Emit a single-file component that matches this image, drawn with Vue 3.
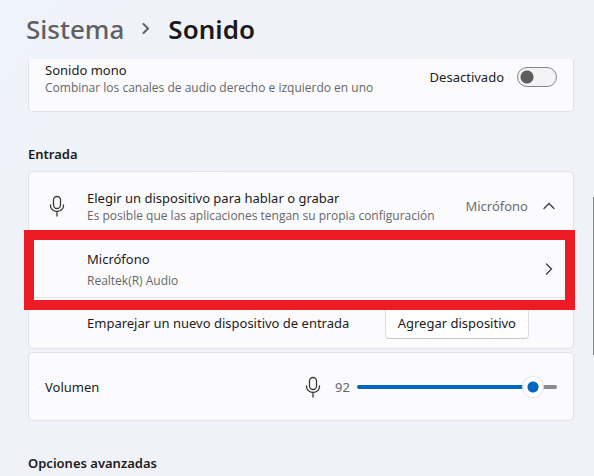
<template>
  <main class="settings">
    <header class="breadcrumb">
      <a href="#" class="crumb">Sistema</a>
      <svg class="crumb-arrow" viewBox="0 0 10 12" aria-hidden="true">
        <path d="M2.500 1 7 5.500 2.500 10" />
      </svg>
      <h1>Sonido</h1>
    </header>

    <section class="card card-mono">
      <div class="text">
        <label for="mono" class="title">Sonido mono</label>
        <span class="hint">Combinar los canales de audio derecho e izquierdo en uno</span>
      </div>
      <div class="switch">
        <span>{{ mono ? 'Activado' : 'Desactivado' }}</span>
        <input id="mono" v-model="mono" type="checkbox" role="switch" class="toggle" />
      </div>
    </section>

    <h2>Entrada</h2>

    <section class="card">
      <button type="button" class="row row-head" :aria-expanded="open" @click="open = !open">
        <svg class="mic" viewBox="0 0 16 22" aria-hidden="true">
          <rect x="4.500" y="1.500" width="7" height="12" rx="3.500" />
          <path d="M1.500 10v.8a6.500 5.700 0 0 0 13 0V10M8 16.500V21" />
        </svg>
        <span class="text">
          <span class="title">Elegir un dispositivo para hablar o grabar</span>
          <span class="hint">Es posible que las aplicaciones tengan su propia configuración</span>
        </span>
        <span class="current">Micrófono</span>
        <svg class="chevron" :class="{ closed: !open }" viewBox="0 0 12 12" aria-hidden="true">
          <path d="M1 8.500 6 3.500l5 5" />
        </svg>
      </button>

      <template v-if="open">
        <div class="highlighted">
          <button type="button" class="row row-device">
            <span class="text">
              <span class="title">Micrófono</span>
              <span class="hint">Realtek(R) Audio</span>
            </span>
            <svg class="chevron" viewBox="0 0 12 12" aria-hidden="true">
              <path d="M3.500 1l5 5-5 5" />
            </svg>
          </button>
        </div>

        <div class="row row-pair">
          <span class="title">Emparejar un nuevo dispositivo de entrada</span>
          <button type="button" class="add">Agregar dispositivo</button>
        </div>
      </template>
    </section>

    <section class="card card-volume">
      <label for="volume" class="title">Volumen</label>
      <svg class="mic" viewBox="0 0 16 22" aria-hidden="true">
        <rect x="4.500" y="1.500" width="7" height="12" rx="3.500" />
        <path d="M1.500 10v.8a6.500 5.700 0 0 0 13 0V10M8 16.500V21" />
      </svg>
      <output for="volume">{{ volume }}</output>
      <input
        id="volume"
        v-model.number="volume"
        type="range"
        min="0"
        max="100"
        class="slider"
        :style="{ '--fill': volume + '%' }"
      />
    </section>

    <h2>Opciones avanzadas</h2>

    <div class="scroll-thumb"></div>
  </main>
</template>

<script setup>
import { ref } from 'vue'

const mono = ref(false)
const open = ref(true)
const volume = ref(92)
</script>

<style>
body {
  background: #f1f2f7;
  overflow: hidden;
}
</style>

<style scoped>
.settings {
  position: relative;
  box-sizing: border-box;
  min-height: 100vh;
  padding: 0 20px 0 28px;
  background: linear-gradient(125deg, #eff3fb 0%, #f1f2f7 45%);
  color: #1b1b1b;
  font-family: 'Segoe UI', 'Noto Sans', 'Open Sans', sans-serif;
  font-size: 13px;
  line-height: 20px;
}

button,
input {
  margin: 0;
  color: inherit;
  font: inherit;
}

.breadcrumb {
  display: flex;
  align-items: center;
  gap: 17px;
  height: 57px;
  margin-left: -2px;
  padding-bottom: 2px;
  font-size: 26px;
  line-height: 36px;
}

.crumb {
  color: #5f6063;
  font-weight: 500;
  text-decoration: none;
}

.crumb-arrow {
  width: 10px;
  height: 12px;
  stroke: #5f6063;
  stroke-width: 2;
}

h1 {
  margin: 0;
  font-size: 26px;
  font-weight: 600;
}

h2 {
  margin: 32px 0 7px;
  font-size: 13px;
  font-weight: 600;
}

svg {
  flex-shrink: 0;
  fill: none;
  stroke: #3a3a3a;
  stroke-width: 1.3;
  stroke-linecap: round;
}

.card {
  border: 1px solid #e2e3ea;
  border-radius: 5px;
  background: #fbfbfd;
}

.text {
  display: flex;
  flex: 1;
  flex-direction: column;
}

.hint {
  color: #66666a;
  font-family: 'Segoe UI', 'Open Sans', sans-serif;
  font-size: 12px;
  line-height: 16px;
}

.card-mono {
  display: flex;
  padding: 1px 16px 15px;
  border-top: 0;
  border-radius: 0 0 5px 5px;
}

.switch {
  display: flex;
  align-items: center;
  gap: 13px;
  height: 34px;
}

.toggle {
  box-sizing: border-box;
  width: 40px;
  height: 20px;
  border: 1px solid #868688;
  border-radius: 10px;
  appearance: none;
  background: radial-gradient(circle at 9px 9px, #5d5d5d 6px, transparent 7px) #f3f3f5;
}

.toggle:checked {
  border-color: #0067c0;
  background: radial-gradient(circle at 29px 9px, #fff 6px, transparent 7px) #0067c0;
}

.row {
  display: flex;
  box-sizing: border-box;
  align-items: center;
  width: 100%;
  padding: 0 18px 0 58px;
  border: 0;
  background: none;
  text-align: left;
}

.row-head {
  height: 68px;
  padding-left: 20px;
}

.row-head .text {
  margin-left: 22px;
}

.mic {
  width: 16px;
  height: 22px;
}

.current {
  margin-right: 15px;
  color: #6c6c70;
}

.chevron {
  width: 12px;
  height: 12px;
}

.chevron.closed {
  transform: rotate(180deg);
}

.highlighted {
  position: relative;
}

/* red marker frame lies over the neighbouring rows */
.highlighted::after {
  content: '';
  position: absolute;
  inset: -10px -2px -12px -5px;
  border: 10px solid #ed1c24;
  pointer-events: none;
}

.row-device {
  height: 58px;
  border-bottom: 1px solid #e2e3ea;
}

.row-device .text {
  gap: 4px;
}

.row-pair {
  justify-content: space-between;
  height: 50px;
  padding-right: 44px;
}

.add {
  height: 32px;
  padding: 0 12px;
  border: 1px solid #dedee2;
  border-bottom-color: #c8c8cc;
  border-radius: 4px;
  background: #fefefe;
}

.card-volume {
  display: flex;
  align-items: center;
  height: 67px;
  margin-top: 3px;
  padding: 0 16px;
}

.card-volume .title {
  flex: 1;
}

output {
  width: 22px;
  margin-left: 14px;
  color: #66666a;
}

.slider {
  width: 200px;
  height: 22px;
  appearance: none;
  background: transparent;
}

.slider::-webkit-slider-runnable-track {
  height: 4px;
  border-radius: 2px;
  background: linear-gradient(to right, #0067c0 var(--fill), #8a8a8c var(--fill));
}

.slider::-webkit-slider-thumb {
  width: 20px;
  height: 20px;
  margin-top: -8px;
  border-radius: 50%;
  appearance: none;
  background: radial-gradient(circle, #0067c0 5px, #fff 6px);
  box-shadow: 0 0 1px 1px #e4e4e8;
}

.scroll-thumb {
  position: absolute;
  top: 197px;
  right: 0;
  width: 1px;
  height: 158px;
  background: #85868a;
}
</style>
